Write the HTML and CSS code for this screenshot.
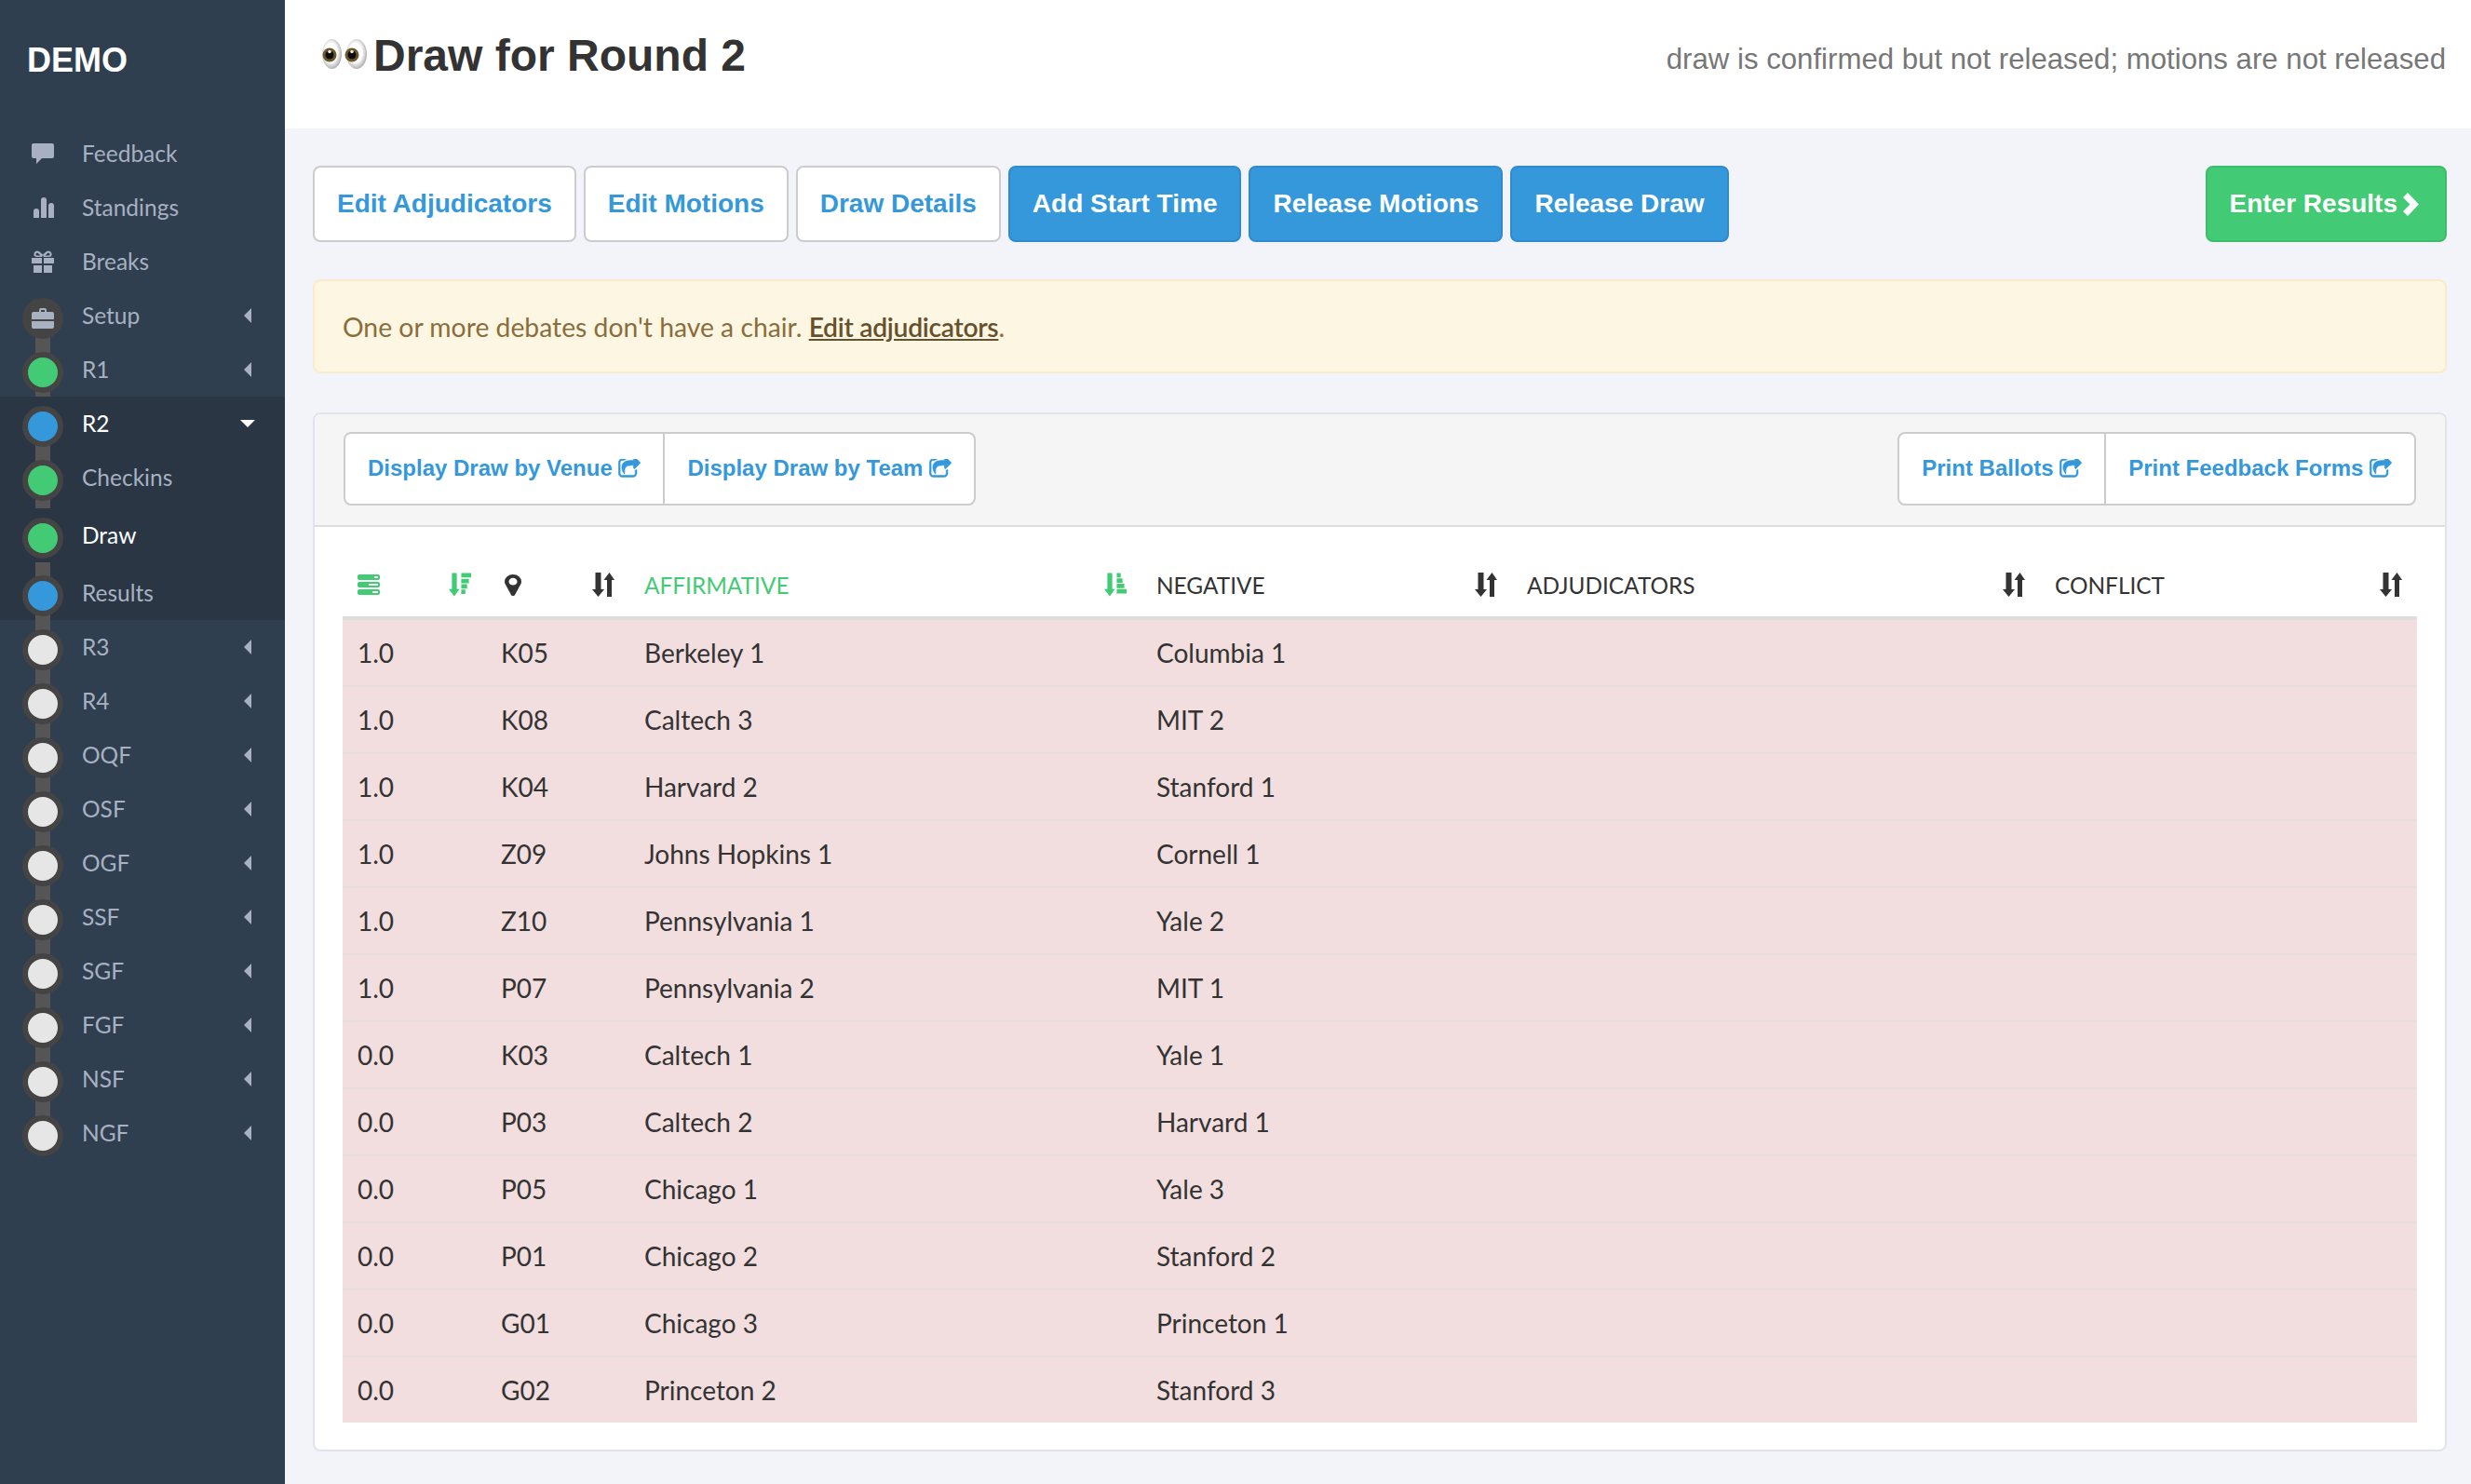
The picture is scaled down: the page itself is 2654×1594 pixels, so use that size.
FILE: index.html
```html
<!DOCTYPE html>
<html lang="en">

<head>
    <meta charset="UTF-8">
    <title>Draw for Round 2</title>
    <link rel="stylesheet" href="styles.css">
</head>

<body>
    <svg class="sprite" xmlns="http://www.w3.org/2000/svg">
        <symbol id="i-comment" viewBox="0 0 24 22">
            <path d="M2 0h20a2 2 0 0 1 2 2v12a2 2 0 0 1-2 2H11l-6 6v-6H2a2 2 0 0 1-2-2V2a2 2 0 0 1 2-2z" />
        </symbol>
        <symbol id="i-bars" viewBox="0 0 22 22">
            <path d="M0 22V15a3 3 0 0 1 6 0v7zM8 22V3a3 3 0 0 1 6 0v19zM16 22V9a3 3 0 0 1 6 0v13z" />
        </symbol>
        <symbol id="i-gift" viewBox="0 0 24 24">
            <path d="M0 8h11v6H0zM13 8h11v6H13zM2 16h9v8H2zM13 16h9v8H13z" />
            <path d="M11 7 5.500 7C3 7 2 5.500 2.500 3.500 3 1 5.500-.5 8 1l4 3.500L16 1c2.500-1.500 5 0 5.500 2.500C22 5.500 21 7 18.500 7H13l-1-2-1 2zM9.500 5.500 7 3C5.500 2.200 4.500 3 4.500 4s.5 1.500 1.500 1.500zM14.500 5.500H18c1 0 1.500-.5 1.500-1.500s-1-1.800-2.500-1z" fill-rule="evenodd" />
        </symbol>
        <symbol id="i-case" viewBox="0 0 24 22">
            <path d="M8 4V2a2 2 0 0 1 2-2h4a2 2 0 0 1 2 2v2h6a2 2 0 0 1 2 2v6H0V6a2 2 0 0 1 2-2zM10 2v2h4V2zM0 14h24v6a2 2 0 0 1-2 2H2a2 2 0 0 1-2-2z" fill-rule="evenodd" />
        </symbol>
        <symbol id="i-share" viewBox="80 150 1640 1500">
            <path d="M1472 989v259q0 119-84.500 203.500t-203.500 84.500h-832q-119 0-203.500-84.500t-84.500-203.500v-832q0-119 84.500-203.500t203.500-84.500h255q13 0 22.500 9.500t9.500 22.500q0 27-26 32-77 26-133 60-10 4-16 4h-112q-66 0-113 47t-47 113v832q0 66 47 113t113 47h832q66 0 113-47t47-113v-214q0-19 18-29 28-13 54-37 16-16 35-8 21 9 21 29zm237-496l-384 384q-18 19-45 19-12 0-25-5-39-17-39-59v-192h-160q-323 0-438 131-119 137-74 473 3 23-20 34-8 2-12 2-16 0-26-13-10-14-21-31t-39.500-68.500-49.500-99.500-38.500-114-17.500-122q0-49 3.500-91t14-90 28-88 47-81.500 68.500-74 94.500-61.500 124.500-48.500 159.500-30.500 196.500-11h160v-192q0-42 39-59 13-5 25-5 26 0 45 19l384 384q19 19 19 45t-19 45z" />
        </symbol>
        <symbol id="i-server" viewBox="0 0 24 22">
            <path d="M2 0h20a2 2 0 0 1 2 2v2a2 2 0 0 1-2 2H2a2 2 0 0 1-2-2V2a2 2 0 0 1 2-2zm16 2v2h4V2zM2 8h20a2 2 0 0 1 2 2v2a2 2 0 0 1-2 2H2a2 2 0 0 1-2-2v-2a2 2 0 0 1 2-2zm10 2v2h10v-2zM2 16h20a2 2 0 0 1 2 2v2a2 2 0 0 1-2 2H2a2 2 0 0 1-2-2v-2a2 2 0 0 1 2-2zm14 2v2h6v-2z" fill-rule="evenodd" />
        </symbol>
        <symbol id="i-sort" viewBox="0 0 24 26">
            <path d="M3.500 0h6v18H13l-6.500 8L0 18h3.500zM18.500 0 24 8h-3v18h-5V8h-3.500z" />
        </symbol>
        <symbol id="i-sort-desc" viewBox="0 0 25 26">
            <path d="M3.500 0h5.500v18h3L6.200 26 0 18h3.500zM14 0h11v5H14zM14 6.500h8.500v5H14zM14 12.500h6.500v5H14zM14 18.500h4.500v5H14z" />
        </symbol>
        <symbol id="i-sort-asc" viewBox="0 0 25 26">
            <path d="M3.500 0h5.500v18h3L6.200 26 0 18h3.500zM14 0h4.500v5H14zM14 6h6.500v5H14zM14 12h8.500v5H14zM14 18h11v5H14z" />
        </symbol>
        <symbol id="i-marker" viewBox="384 128 1024 1536" preserveAspectRatio="none">
            <path d="M1152 640q0-106-75-181t-181-75-181 75-75 181 75 181 181 75 181-75 75-181zm256 0q0 109-33 179l-364 774q-16 33-47.500 52t-67.500 19-67.500-19-46.500-52l-365-774q-33-70-33-179 0-212 150-362t362-150 362 150 150 362z" />
        </symbol>
    </svg>

    <div class="layout">
        <aside class="sidebar">
            <div class="brand">DEMO</div>
            <nav>
                <a class="nav-row"><span class="nav-slot"><svg class="ico-comment"><use href="#i-comment" /></svg></span>Feedback</a>
                <a class="nav-row"><span class="nav-slot"><svg class="ico-bars"><use href="#i-bars" /></svg></span>Standings</a>
                <a class="nav-row"><span class="nav-slot"><svg class="ico-gift"><use href="#i-gift" /></svg></span>Breaks</a>
                <a class="nav-row link-long"><span class="dot dot-tool"><svg class="ico-case"><use href="#i-case" /></svg></span><span class="nav-slot"></span>Setup<i class="caret-left"></i></a>
                <a class="nav-row link-short"><span class="dot dot-green"></span><span class="nav-slot"></span>R1<i class="caret-left"></i></a>

                <div class="nav-open">
                    <a class="nav-row link-long is-active"><span class="dot dot-blue"></span><span class="nav-slot"></span>R2<i class="caret-down"></i></a>
                    <div class="nav-sub">
                        <a class="nav-row link-sub"><span class="dot dot-green"></span><span class="nav-slot"></span>Checkins</a>
                        <a class="nav-row is-active"><span class="dot dot-green"></span><span class="nav-slot"></span>Draw</a>
                        <a class="nav-row link-up link-long"><span class="dot dot-blue"></span><span class="nav-slot"></span>Results</a>
                    </div>
                </div>

                <a class="nav-row link-long"><span class="dot dot-grey"></span><span class="nav-slot"></span>R3<i class="caret-left"></i></a>
                <a class="nav-row link-long"><span class="dot dot-grey"></span><span class="nav-slot"></span>R4<i class="caret-left"></i></a>
                <a class="nav-row link-long"><span class="dot dot-grey"></span><span class="nav-slot"></span>OQF<i class="caret-left"></i></a>
                <a class="nav-row link-long"><span class="dot dot-grey"></span><span class="nav-slot"></span>OSF<i class="caret-left"></i></a>
                <a class="nav-row link-long"><span class="dot dot-grey"></span><span class="nav-slot"></span>OGF<i class="caret-left"></i></a>
                <a class="nav-row link-long"><span class="dot dot-grey"></span><span class="nav-slot"></span>SSF<i class="caret-left"></i></a>
                <a class="nav-row link-long"><span class="dot dot-grey"></span><span class="nav-slot"></span>SGF<i class="caret-left"></i></a>
                <a class="nav-row link-long"><span class="dot dot-grey"></span><span class="nav-slot"></span>FGF<i class="caret-left"></i></a>
                <a class="nav-row link-long"><span class="dot dot-grey"></span><span class="nav-slot"></span>NSF<i class="caret-left"></i></a>
                <a class="nav-row"><span class="dot dot-grey"></span><span class="nav-slot"></span>NGF<i class="caret-left"></i></a>
            </nav>
        </aside>

        <main class="main">
            <header class="page-head">
                <h1 class="title">
                    <svg class="eyes" viewBox="0 0 48 32">
                        <defs>
                            <radialGradient id="eye-white" cx="45%" cy="45%" r="58%">
                                <stop offset="55%" stop-color="#ffffff" />
                                <stop offset="100%" stop-color="#a8a8a8" />
                            </radialGradient>
                        </defs>
                        <ellipse cx="10.500" cy="16" rx="10.500" ry="16" fill="url(#eye-white)" />
                        <ellipse cx="37" cy="16" rx="11" ry="16" fill="url(#eye-white)" />
                        <circle cx="8" cy="17" r="7.500" fill="#6a5a2a" />
                        <circle cx="32" cy="17" r="7.500" fill="#6a5a2a" />
                        <circle cx="8" cy="17" r="4.500" fill="#0d0d0d" />
                        <circle cx="32" cy="17" r="4.500" fill="#0d0d0d" />
                        <circle cx="8" cy="13.500" r="1.800" fill="#e8e8e8" />
                        <circle cx="32" cy="13.500" r="1.800" fill="#e8e8e8" />
                    </svg>
                    Draw for Round 2
                </h1>
                <p class="status">draw is confirmed but not released; motions are not released</p>
            </header>

            <div class="content">
                <div class="toolbar">
                    <a class="btn">Edit Adjudicators</a>
                    <a class="btn">Edit Motions</a>
                    <a class="btn">Draw Details</a>
                    <a class="btn btn-blue">Add Start Time</a>
                    <a class="btn btn-blue">Release Motions</a>
                    <a class="btn btn-blue">Release Draw</a>
                    <a class="btn btn-green">Enter Results<svg class="chevron" viewBox="0 0 17 25"><path d="M5 0l12 12.500L5 25l-5-5 7.500-7.500L0 5z" /></svg></a>
                </div>

                <div class="alert">One or more debates don't have a chair. <a class="alert-link">Edit adjudicators</a>.</div>

                <section class="panel">
                    <div class="panel-head">
                        <div class="btn-group">
                            <a class="group-btn">Display Draw by Venue <svg class="ico-share"><use href="#i-share" /></svg></a>
                            <a class="group-btn">Display Draw by Team <svg class="ico-share"><use href="#i-share" /></svg></a>
                        </div>
                        <div class="btn-group">
                            <a class="group-btn">Print Ballots <svg class="ico-share"><use href="#i-share" /></svg></a>
                            <a class="group-btn">Print Feedback Forms <svg class="ico-share"><use href="#i-share" /></svg></a>
                        </div>
                    </div>

                    <div class="panel-body">
                        <table class="draw-table">
                            <colgroup>
                                <col class="col-small">
                                <col class="col-small">
                                <col class="col-aff">
                                <col class="col-neg">
                                <col class="col-adj">
                                <col class="col-con">
                            </colgroup>
                            <thead>
                                <tr>
                                    <th class="is-sorted"><div class="th-in"><svg class="ico-server"><use href="#i-server" /></svg><svg class="ico-sort"><use href="#i-sort-desc" /></svg></div></th>
                                    <th><div class="th-in"><svg class="ico-marker"><use href="#i-marker" /></svg><svg class="ico-sort"><use href="#i-sort" /></svg></div></th>
                                    <th class="is-sorted"><div class="th-in">Affirmative<svg class="ico-sort"><use href="#i-sort-asc" /></svg></div></th>
                                    <th><div class="th-in">Negative<svg class="ico-sort"><use href="#i-sort" /></svg></div></th>
                                    <th><div class="th-in">Adjudicators<svg class="ico-sort"><use href="#i-sort" /></svg></div></th>
                                    <th><div class="th-in">Conflict<svg class="ico-sort"><use href="#i-sort" /></svg></div></th>
                                </tr>
                            </thead>
                            <tbody>
                                <tr><td>1.0</td><td>K05</td><td>Berkeley 1</td><td>Columbia 1</td><td></td><td></td></tr>
                                <tr><td>1.0</td><td>K08</td><td>Caltech 3</td><td>MIT 2</td><td></td><td></td></tr>
                                <tr><td>1.0</td><td>K04</td><td>Harvard 2</td><td>Stanford 1</td><td></td><td></td></tr>
                                <tr><td>1.0</td><td>Z09</td><td>Johns Hopkins 1</td><td>Cornell 1</td><td></td><td></td></tr>
                                <tr><td>1.0</td><td>Z10</td><td>Pennsylvania 1</td><td>Yale 2</td><td></td><td></td></tr>
                                <tr><td>1.0</td><td>P07</td><td>Pennsylvania 2</td><td>MIT 1</td><td></td><td></td></tr>
                                <tr><td>0.0</td><td>K03</td><td>Caltech 1</td><td>Yale 1</td><td></td><td></td></tr>
                                <tr><td>0.0</td><td>P03</td><td>Caltech 2</td><td>Harvard 1</td><td></td><td></td></tr>
                                <tr><td>0.0</td><td>P05</td><td>Chicago 1</td><td>Yale 3</td><td></td><td></td></tr>
                                <tr><td>0.0</td><td>P01</td><td>Chicago 2</td><td>Stanford 2</td><td></td><td></td></tr>
                                <tr><td>0.0</td><td>G01</td><td>Chicago 3</td><td>Princeton 1</td><td></td><td></td></tr>
                                <tr><td>0.0</td><td>G02</td><td>Princeton 2</td><td>Stanford 3</td><td></td><td></td></tr>
                            </tbody>
                        </table>
                    </div>
                </section>
            </div>
        </main>
    </div>
</body>

</html>
```
FILE: styles.css
```css
* {
    margin: 0;
    padding: 0;
    box-sizing: border-box;
}

body {
    font-family: "Lato", "Liberation Sans", sans-serif;
    font-size: 28px;
    color: #333;
    background-color: #f3f4f9;
}

.sprite {
    display: none;
}

.layout {
    display: flex;
    min-height: 1594px;
}

/* sidebar */
.sidebar {
    width: 306px;
    flex: none;
    background-color: #303f4f;
    color: #a7b1c2;
}

.brand {
    height: 136px;
    padding-left: 29px;
    font-family: "Liberation Sans", sans-serif;
    font-size: 36px;
    font-weight: bold;
    line-height: 129px;
    color: #fff;
}

.nav-row {
    position: relative;
    display: flex;
    align-items: center;
    height: 58px;
    padding: 0 36px 1px 34px;
    font-size: 24.500px;
}

.nav-row.is-active {
    color: #fff;
}

.nav-slot {
    width: 24px;
    margin-right: 30px;
    flex: none;
    display: flex;
    justify-content: center;
    align-items: center;
}

.nav-slot svg,
.dot svg {
    fill: #a7b1c2;
    display: block;
}

.ico-comment {
    width: 24px;
    height: 22px;
}

.ico-bars {
    width: 22px;
    height: 22px;
    margin-left: 2px;
}

.ico-gift {
    width: 24px;
    height: 24px;
}

.ico-case {
    width: 24px;
    height: 22px;
}

.dot {
    position: absolute;
    left: 24px;
    top: 10px;
    z-index: 2;
    width: 44px;
    height: 44px;
    border: 6px solid #444;
    border-radius: 50%;
    display: flex;
    justify-content: center;
    align-items: center;
}

.dot-tool {
    background-color: #444;
}

.dot-green {
    background-color: #43ca75;
}

.dot-blue {
    background-color: #3498db;
}

.dot-grey {
    background-color: #e6e6e6;
}

/* connector between two dots */
.link-long::after,
.link-short::after,
.link-sub::after,
.link-up::before {
    content: "";
    position: absolute;
    left: 38px;
    width: 16px;
    background-color: #555;
}

.link-long::after {
    top: 50px;
    height: 30px;
}

.link-short::after {
    top: 50px;
    height: 8px;
}

.link-sub::after {
    top: 50px;
    height: 12px;
}

.link-up::before {
    top: -4px;
    height: 16px;
}

.caret-left {
    margin-left: auto;
    width: 0;
    height: 0;
    border-style: solid;
    border-width: 8px 8px 8px 0;
    border-color: transparent #a7b1c2 transparent transparent;
}

.caret-down {
    margin-left: auto;
    margin-right: -4px;
    width: 0;
    height: 0;
    border-style: solid;
    border-width: 8px 8px 0 8px;
    border-color: #fff transparent transparent transparent;
}

.nav-open {
    background-color: #2a3644;
}

.nav-sub {
    display: flex;
    flex-direction: column;
    gap: 4px;
}

/* main column */
.main {
    flex: 1;
    min-width: 0;
}

.page-head {
    height: 138px;
    padding: 0 27px 0 40px;
    background-color: #fff;
    display: flex;
    justify-content: space-between;
    align-items: flex-start;
    font-family: "Liberation Sans", sans-serif;
}

.title {
    display: flex;
    align-items: flex-start;
    gap: 7px;
    margin-top: 32px;
    font-size: 48px;
    line-height: 56px;
    font-weight: bold;
}

.eyes {
    width: 48px;
    height: 32px;
    margin-top: 10px;
}

.status {
    margin-top: 45px;
    font-size: 31.200px;
    line-height: 38px;
    color: #777;
}

.content {
    padding: 40px 26px 34px 30px;
}

.toolbar {
    display: flex;
    gap: 8px;
}

.btn {
    height: 82px;
    padding: 0 24px;
    border: 2px solid #ccc;
    border-radius: 8px;
    background-color: #fff;
    color: #3498db;
    font-family: "Liberation Sans", sans-serif;
    font-size: 28px;
    font-weight: bold;
    display: flex;
    align-items: center;
    white-space: nowrap;
}

.btn-blue {
    background-color: #3498db;
    border-color: #2f8ad0;
    color: #fff;
}

.btn-green {
    margin-left: auto;
    padding-right: 28px;
    background-color: #43ca75;
    border-color: #3cbd6c;
    color: #fff;
}

.chevron {
    width: 17px;
    height: 25px;
    margin-left: 6px;
    fill: #fff;
}

.alert {
    height: 101px;
    margin-top: 40px;
    padding: 0 30px;
    border: 2px solid #faebcc;
    border-radius: 8px;
    background-color: #fdf6e3;
    color: #8a6d3b;
    font-size: 28.300px;
    line-height: 99px;
}

.alert-link {
    color: #66512c;
    font-weight: 600;
    letter-spacing: -0.300px;
    text-decoration: underline;
}

.panel {
    margin-top: 42px;
    border: 2px solid #e2e3e8;
    border-radius: 8px;
    background-color: #fff;
    overflow: hidden;
}

.panel-head {
    height: 121px;
    padding: 19px 31px 0;
    background-color: #f5f5f5;
    border-bottom: 2px solid #ddd;
    display: flex;
    justify-content: space-between;
    align-items: flex-start;
}

.btn-group {
    display: flex;
    height: 79px;
    border: 2px solid #ccc;
    border-radius: 8px;
    background-color: #fff;
}

.group-btn {
    padding: 0 24px;
    color: #3498db;
    font-family: "Liberation Sans", sans-serif;
    font-size: 24px;
    font-weight: bold;
    line-height: 73px;
    white-space: pre;
}

.group-btn + .group-btn {
    border-left: 2px solid #ccc;
}

.ico-share {
    width: 24px;
    height: 21px;
    fill: #3498db;
    stroke: #3498db;
    stroke-width: 40;
    vertical-align: -3px;
}

.panel-body {
    padding: 30px 31px 29px 30px;
}

.draw-table {
    width: 100%;
    table-layout: fixed;
    border-collapse: separate;
    border-spacing: 0;
}

.col-small {
    width: 154px;
}

.col-aff {
    width: 550px;
}

.col-neg {
    width: 398px;
}

.col-adj {
    width: 567px;
}

.col-con {
    width: 405px;
}

.draw-table th {
    height: 70px;
    padding: 0 16px 2px 16px;
    border-bottom: 4px solid #ddd;
    font-size: 24.400px;
    font-weight: 400;
    text-align: left;
    text-transform: uppercase;
}

.th-in {
    display: flex;
    justify-content: space-between;
    align-items: center;
}

.draw-table th.is-sorted {
    color: #43ca75;
}

.draw-table th svg {
    fill: currentColor;
    display: block;
}

.ico-server {
    width: 24px;
    height: 22px;
}

.ico-marker {
    width: 18px;
    height: 23px;
    margin-left: 4px;
}

.ico-sort {
    width: 24px;
    height: 26px;
}

.draw-table td {
    height: 72px;
    padding: 0 16px;
    background-color: #f2dede;
    border-bottom: 2px solid #e6dddd;
    white-space: nowrap;
}

.draw-table tr:last-child td {
    height: 70px;
    border-bottom: 0;
}
```
